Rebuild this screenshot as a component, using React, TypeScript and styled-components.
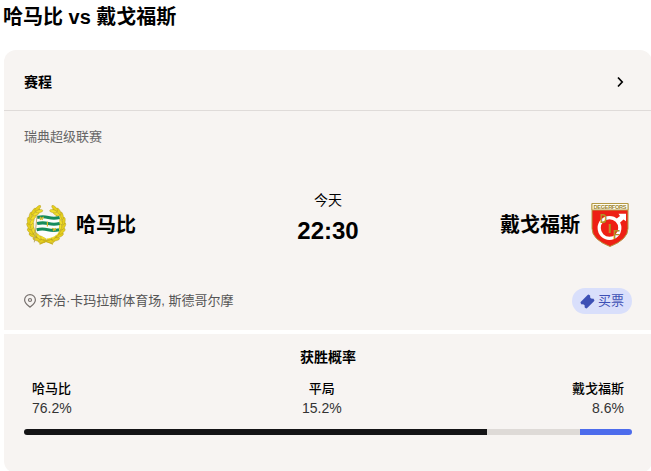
import styled, { createGlobalStyle } from "styled-components";

const GlobalStyle = createGlobalStyle`
  * {
    box-sizing: border-box;
  }

  body {
    margin: 0;
    background: #fff;
    color: #000;
    font-family: "Liberation Sans", "Noto Sans CJK SC", sans-serif;
    overflow: hidden;
  }
`;

const App = () => {
  return (
    <>
      <GlobalStyle />
      <PageStyled>
        <TitleStyled>哈马比 vs 戴戈福斯</TitleStyled>
        <Match />
        <Probability />
      </PageStyled>
    </>
  );
};

const PageStyled = styled.main`
  width: 652px;
  height: 473px;
  padding-left: 4px;
  display: flex;
  flex-direction: column;
`;

const TitleStyled = styled.h1`
  height: 50px;
  margin: 0 0 0 -1px;
  padding-top: 2px;
  font-size: 20px;
  line-height: 30px;
`;

const MatchStyled = styled.section`
  height: 280px;
  background: #f7f4f2;
  border-radius: 12px 12px 0 0;
`;

const MatchHeaderStyled = styled.header`
  height: 61px;
  padding: 4px 20px 0;
  display: flex;
  justify-content: space-between;
  align-items: center;
  border-bottom: 1px solid #dfdbd9;
  font-size: 14px;
  font-weight: bold;
  line-height: 20px;

  svg {
    margin-right: 8px;
  }
`;

const LeagueStyled = styled.div`
  padding: 16px 20px 0;
  color: #666;
  font-size: 13px;
  line-height: 20px;
`;

const FixtureStyled = styled.div`
  height: 134px;
  padding: 22px 20px 0;
  display: grid;
  grid-template-columns: 1fr auto 1fr;
  align-items: center;
`;

const TeamStyled = styled.div<{ $away?: boolean }>`
  display: flex;
  flex-direction: ${({ $away }) => ($away ? "row-reverse" : "row")};
  align-items: center;
  gap: 8px;
  font-size: 20px;
  font-weight: bold;
  line-height: 28px;
`;

const KickoffStyled = styled.div`
  display: flex;
  flex-direction: column;
  align-items: center;
  padding-bottom: 14px;
`;

const DayStyled = styled.div`
  font-size: 14px;
  line-height: 20px;
`;

const TimeStyled = styled.div`
  margin-top: 5px;
  font-size: 24px;
  font-weight: bold;
  line-height: 32px;
`;

const MatchFooterStyled = styled.footer`
  height: 26px;
  margin-top: 7px;
  padding: 0 20px;
  display: flex;
  justify-content: space-between;
  align-items: center;
`;

const VenueStyled = styled.div`
  display: flex;
  align-items: center;
  gap: 4px;
  color: #555;
  font-size: 13px;
  line-height: 20px;
`;

const TicketButtonStyled = styled.button`
  width: 60px;
  height: 26px;
  padding: 0;
  display: flex;
  justify-content: center;
  align-items: center;
  gap: 3px;
  border: none;
  border-radius: 13px;
  background: #d9dffb;
  color: #3d50b5;
  font-family: inherit;
  font-size: 13px;
  line-height: 20px;
`;

const Match = () => {
  return (
    <MatchStyled>
      <MatchHeaderStyled>
        赛程
        <Chevron />
      </MatchHeaderStyled>
      <LeagueStyled>瑞典超级联赛</LeagueStyled>
      <FixtureStyled>
        <TeamStyled>
          <HammarbyCrest />
          哈马比
        </TeamStyled>
        <KickoffStyled>
          <DayStyled>今天</DayStyled>
          <TimeStyled>22:30</TimeStyled>
        </KickoffStyled>
        <TeamStyled $away>
          <DegerforsCrest />
          戴戈福斯
        </TeamStyled>
      </FixtureStyled>
      <MatchFooterStyled>
        <VenueStyled>
          <Pin />
          乔治·卡玛拉斯体育场, 斯德哥尔摩
        </VenueStyled>
        <TicketButtonStyled>
          <Ticket />
          买票
        </TicketButtonStyled>
      </MatchFooterStyled>
    </MatchStyled>
  );
};

const ProbabilityStyled = styled.section`
  height: 139px;
  margin-top: 4px;
  padding: 13px 20px 0;
  background: #f7f4f2;
  border-radius: 0 0 12px 12px;
`;

const ProbabilityTitleStyled = styled.h2`
  margin: 0;
  font-size: 14px;
  line-height: 20px;
  text-align: center;
`;

const OutcomesStyled = styled.div`
  margin-top: 13px;
  padding: 0 8px;
  display: flex;
  justify-content: space-between;
`;

const OutcomeStyled = styled.div<{ $align: string }>`
  text-align: ${({ $align }) => $align};
  font-size: 13px;
  font-weight: 500;
  line-height: 18px;
`;

const PercentStyled = styled.div`
  color: #333;
  font-size: 14px;
  font-weight: normal;
  line-height: 20px;
`;

const BarStyled = styled.div`
  height: 6px;
  margin-top: 11px;
  display: flex;
  border-radius: 3px;
  overflow: hidden;
`;

const SegmentStyled = styled.div<{ $color: string }>`
  background: ${({ $color }) => $color};
`;

const outcomes = [
  { name: "哈马比", value: 76.2, color: "#141416", align: "left" },
  { name: "平局", value: 15.2, color: "#dedad7", align: "center" },
  { name: "戴戈福斯", value: 8.6, color: "#4d6cec", align: "right" },
];

const Probability = () => {
  return (
    <ProbabilityStyled>
      <ProbabilityTitleStyled>获胜概率</ProbabilityTitleStyled>
      <OutcomesStyled>
        {outcomes.map(({ name, value, align }) => (
          <OutcomeStyled key={name} $align={align}>
            {name}
            <PercentStyled>{value}%</PercentStyled>
          </OutcomeStyled>
        ))}
      </OutcomesStyled>
      <BarStyled>
        {outcomes.map(({ name, value, color }) => (
          <SegmentStyled key={name} $color={color} style={{ width: `${value}%` }} />
        ))}
      </BarStyled>
    </ProbabilityStyled>
  );
};

const Chevron = () => (
  <svg width="8" height="12" viewBox="0 0 8 12" fill="none">
    <path d="M2 1.5 6.2 6 2 10.5" stroke="#000" strokeWidth="1.7" />
  </svg>
);

const Pin = () => (
  <svg width="12" height="14" viewBox="0 0 12 14" fill="none" stroke="#77716e" strokeWidth="1.2">
    <path d="M6 13.2C4.8 12 .6 9.5.6 6a5.4 5.4 0 0 1 10.8 0c0 3.5-4.2 6-5.4 7.2Z" />
    <circle cx="6" cy="6" r="1.5" />
  </svg>
);

const Ticket = () => (
  <svg width="15" height="15" viewBox="0 0 15 15" fill="#3d50b5">
    <path d="M7.6.9Q8.5 0 9.4.9L10.2 1.7Q9.5 5 13.2 4.6L14 5.4Q14.9 6.300 14 7.200L7.200 14Q6.300 14.900 5.400 14L4.600 13.200Q5.300 10 1.700 10.400L.9 9.600Q0 8.700.9 7.800Z" />
  </svg>
);

// leaves of the left half of the wreath, mirrored for the right half
const leaves = [
  [17, 37, 15],
  [12, 35, 30],
  [8, 31, 45],
  [6, 27, 60],
  [5, 22, 78],
  [5, 17, 98],
  [7, 12, 118],
  [10, 8, 135],
  [14, 5, 150],
];

const Wreath = () => (
  <g>
    <path d="M22 39C4 36 1 17 15 5" fill="none" stroke="#b59d17" strokeWidth="2" />
    {leaves.map(([x, y, angle]) => (
      <g key={angle} transform={`translate(${x} ${y}) rotate(${angle})`}>
        <ellipse cy="1.8" rx="4.2" ry="1.7" fill="#e6d01c" stroke="#a89022" strokeWidth=".4" transform="rotate(-16)" />
        <ellipse cy="-1.8" rx="3.8" ry="1.6" fill="#f1de2b" stroke="#a89022" strokeWidth=".4" transform="rotate(18)" />
      </g>
    ))}
    <path d="m18 37 11 5" stroke="#cdb41d" strokeWidth="1.6" />
  </g>
);

const HammarbyCrest = () => (
  <svg width="44" height="44" viewBox="-2 -2 47 47">
    <Wreath />
    <g transform="matrix(-1 0 0 1 43.5 0)">
      <Wreath />
    </g>
    <path d="M11 12q6-2 12 0t13 0l-1 17q-2 5-12 7-9-3-12-9Z" fill="#fdfdfb" />
    <path
      d="M12 13.5q6-1.5 12 0t12 0M12 20q6-1.5 12 0t12 0M11.500 26.500q6-1.5 12 0t12 0"
      fill="none"
      stroke="#168b5b"
      strokeWidth="3.3"
    />
    <path d="M12 11 9 40" stroke="#b8a76a" />
    <path d="m15 13 3 3m1-3-4 3m8 2v5m5 2 4 2m0-2-3 3" stroke="#d9b928" strokeWidth="1.3" />
  </svg>
);

const CrestLetterStyled = styled.text`
  fill: #b49228;
  font-family: "Liberation Sans", sans-serif;
  font-size: 13px;
  font-weight: bold;
`;

const DegerforsCrest = () => (
  <svg width="44" height="44" viewBox="0 0 44 44">
    <path d="M4 .5h36v25q0 11-18 18-18-7-18-18Z" fill="#ee2015" stroke="#b59a45" />
    <path d="M4 .5h36V7H4Z" fill="#fffdf1" stroke="#b59a45" />
    <text x="22" y="5.9" fill="#9b832c" fontSize="5.6" textAnchor="middle" textLength="33">
      DEGERFORS
    </text>
    <circle cx="21.500" cy="25" r="10.3" fill="none" stroke="#fff" strokeWidth="3.2" />
    <path d="m27.5 16.5 4.500-3.500-1.500-2.300H38v7.500l-2.500-1.700-4.500 4Z" fill="#fff" />
    <CrestLetterStyled x="12" y="20" textLength="7" lengthAdjust="spacingAndGlyphs">D</CrestLetterStyled>
    <CrestLetterStyled x="20" y="29.5">I</CrestLetterStyled>
    <CrestLetterStyled x="25" y="36" textLength="7" lengthAdjust="spacingAndGlyphs">F</CrestLetterStyled>
  </svg>
);

export default App;
